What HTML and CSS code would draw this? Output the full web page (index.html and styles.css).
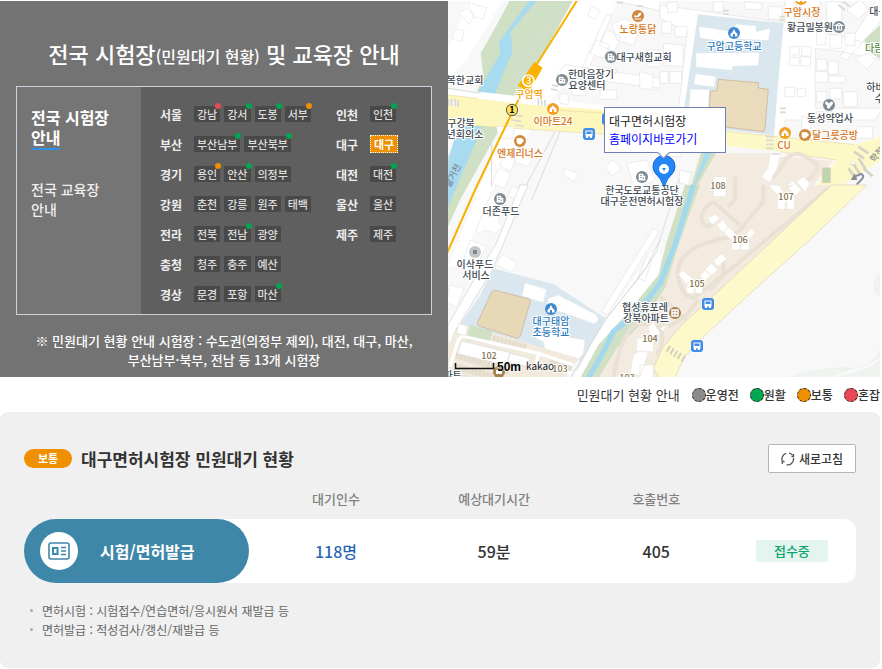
FILE: index.html
```html
<!DOCTYPE html>
<html lang="ko">
<head>
<meta charset="utf-8">
<meta name="viewport" content="width=device-width, initial-scale=1">
<title>전국 시험장 안내</title>
<link rel="stylesheet" href="styles.css">
</head>
<body>
<main class="page">
<section class="finder">
  <div class="guide">
    <h1>전국 시험장<small>(민원대기 현황)</small> 및 교육장 안내</h1>
    <div class="box">
      <nav class="tabs">
        <a class="tab current" href="#exam">전국 시험장<br><span>안내</span></a>
        <a class="tab" href="#edu">전국 교육장<br>안내</a>
      </nav>
      <div class="regions">
        <dl>
          <div class="row"><dt>서울</dt><dd><button class="busy">강남</button><button class="smooth">강서</button><button class="smooth">도봉</button><button class="normal">서부</button></dd></div>
          <div class="row"><dt>부산</dt><dd><button class="smooth">부산남부</button><button class="smooth">부산북부</button></dd></div>
          <div class="row"><dt>경기</dt><dd><button class="normal">용인</button><button class="smooth">안산</button><button>의정부</button></dd></div>
          <div class="row"><dt>강원</dt><dd><button>춘천</button><button>강릉</button><button>원주</button><button>태백</button></dd></div>
          <div class="row"><dt>전라</dt><dd><button>전북</button><button class="smooth">전남</button><button>광양</button></dd></div>
          <div class="row"><dt>충청</dt><dd><button>청주</button><button>충주</button><button>예산</button></dd></div>
          <div class="row"><dt>경상</dt><dd><button>문경</button><button>포항</button><button class="smooth">마산</button></dd></div>
        </dl>
        <dl>
          <div class="row"><dt>인천</dt><dd><button class="smooth">인천</button></dd></div>
          <div class="row"><dt>대구</dt><dd><button class="selected">대구</button></dd></div>
          <div class="row"><dt>대전</dt><dd><button class="smooth">대전</button></dd></div>
          <div class="row"><dt>울산</dt><dd><button>울산</button></dd></div>
          <div class="row"><dt>제주</dt><dd><button>제주</button></dd></div>
        </dl>
      </div>
    </div>
    <p class="notice">※ 민원대기 현황 안내 시험장 : 수도권(의정부 제외), 대전, 대구, 마산,<br>부산남부·북부, 전남 등 13개 시험장</p>
  </div>
  <div class="map">
    <svg viewBox="448 1 432 376" preserveAspectRatio="xMinYMin slice" role="img" aria-label="지도">
      <defs>
        <g id="bus"><rect x="-6" y="-6" width="12" height="12" rx="3" fill="#3f8de8"/><path d="M-3.500-3.500h7v6h-7zM-3 2h2v2h-2zM1 2h2v2h-2z" fill="#fff"/><path d="M-2.500-2.500h5V0h-5z" fill="#3f8de8"/></g>
        <g id="office"><circle r="6" fill="#7c8b94"/><path d="M-3 3v-6h4v2h2v4zM-4 3h8" fill="#fff" stroke="#fff" stroke-width=".6"/><path d="M-1.800-1.500h1.500M-1.800.5h1.500M1.300.5v1.500" stroke="#7c8b94"/></g>
        <g id="school"><circle r="6" fill="#4089cf"/><path d="M0-4 1.500-1 3.500 1v2.500H1V1h-2v2.500h-2.500V1L-1.500-1z" fill="#fff"/></g>
        <g id="cafe"><circle r="6" fill="#d08a3c"/><path d="M-3-2.500h5V1a2 2 0 0 1-2 2h-1a2 2 0 0 1-2-2zM2-1.500c2 0 2 2.500 0 2.500" fill="#fff" stroke="#fff" stroke-width=".7"/></g>
        <g id="shop"><circle r="6" fill="#f0a12b"/><path d="M-3.500 0 0-3.500 3.500 0v3h-7z" fill="#fff"/><path d="M-1 3V.5h2V3" fill="#f0a12b"/></g>
      </defs>
      <rect x="448" width="434" height="378" fill="#f8f8f8"/>
      <!-- north-west: stream, park and metro line -->
      <g transform="translate(440) scale(.33333)">
        <path d="M90 0h100L80 180 24 235v-90z" fill="#fff"/>
        <path d="M210 0h200L285 200 205 340 60 600 24 680V480l66-160 40-90-8-70 45-80z" fill="#cfe0c5"/>
        <path d="M270 0h22L212 95l6 60-28 65-60 150-46 110L24 620V480l35-115 40-65 62-105 20-35-4-35z" fill="#a8daf0"/>
        <path d="M400 0h138L435 190 330 300 150 580 60 800H24L205 350z" fill="#fff"/>
        <path d="M24 265 660 335v80L24 355z" fill="#fff"/>
        <path d="M375 195l285 40v30l-310-40zM510 0h150v32zM500 45h16l-65 150 80 15-4 10-100-18z" fill="#fff" stroke="#e3e3e3" stroke-width="2"/>
        <path d="M378 0 225 250M335 40 190 280M24 265l100 15M24 500v-40M345 395 235 600M360 395l-85 205M155 430v130" fill="none" stroke="#dadada" stroke-width="3"/>
        <path d="M24 285l190 23 75 8 371 25v70L24 372z" fill="#fdf7bd"/><path d="M24 372l475 31M24 285l90 10M340 330l320 20" fill="none" stroke="#ead9a4" stroke-width="2"/>
        <path d="M30 300l20 2v16l-20-2zM85 8l55 15-10 35-30-8zM45 85l28 8-8 32-28-8zM55 40l28-15 20 22-15 25zM515 75l40-20 45 30-20 50-50-15zM500 90l-22 45 45 20 20-45zM470 120l-20 40 40 15 20-40zM395 258h40v30l-40-4zM480 270h50v28h-50zM360 280l25 4v30l-25-4zM520 480l-25 20 20 28 28-22zM375 505l42 18-15 22-33-22zM560 490l60-10 25 60-60 30zM170 380h50v35h-45zM235 440l50 20-20 40-45-15zM195 465l35 12-18 34-35-12zM175 505l38 15-20 45-38-15zM598 215l40 10v45l-38-5zM455 20l25 10-12 28-25-10zM620 150h40v50h-40z" fill="#fff" stroke="#e5e5e5" stroke-width="2"/>
        <path d="M25 296v20M35 297v20M45 298v20M55 300v20M220 345l28 4M215 360l28 4M225 375l26 4M335 255l20 4M333 267l20 4M295 295v20M305 297v20M315 299v20M530 8h20M590 18h20" stroke="#d9d9d2" stroke-width="5"/>
        <circle cx="283" cy="356" r="30" fill="#fdf7bd"/><path d="M310 335v45l90 10v-45z" fill="#fdf7bd"/>
        <path d="M412 0 283 205 215 340 105 570 12 780" fill="none" stroke="#f9b000" stroke-width="6"/>
        <path d="M283 186l25 17-40 70-35-15z" fill="#fcb200"/>
        <circle cx="265" cy="242" r="17" fill="#fcb200" stroke="#fff" stroke-width="5"/><circle cx="216" cy="330" r="17" fill="#ffe352" stroke="#555" stroke-width="3"/>
      </g>
      <!-- north-east: high school and side streets -->
      <g transform="translate(660) scale(.33333)">
        <path d="M0 0h666v400L0 330z" fill="#f8f8f8"/>
        <path d="M0 15l105 15 270 38V0h28v75l263 65v40l-120-25-80-10v180h200l-20 35H375v60l-35 20 20-340-245-30-33 300-30-10 30-265L0 55zM650 0h16v60L560 180l-20-10z" fill="#fff" stroke="#e3e3e3" stroke-width="2"/>
        <path d="M114 43l257 27-31 335-275-30z" fill="#dae7ef"/>
        <path d="M118 80l100 15 10-22 60 5v18l42-10-5 35-95-5-5 12-105-15zM108 160l190-2-4 38-75 2-5 12-105-10zM107 222l60 8-4 30-60-7zM92 268l55 2-4 110-60-5z" fill="#fff"/>
        <path d="M175 238l120 10v16l30 4-10 115-5 12-165-20 6-100 20-4z" fill="#e9dbbc" stroke="#c8aa8d" stroke-width="2"/>
        <path d="M0 388l75-8 120 14 390 40 81-25v70L510 580H450l80-100-170-25L0 415z" fill="#fdf9c7"/><path d="M195 394l390 40M360 455l170 25" stroke="#ead9a4" stroke-width="2"/>
        <path d="M120 460h210l30 10 160 12-80 98H85z" fill="#f3ebe0"/>
        <path d="M125 455h45l-60 105-10 60H75zM612 120l54-50v110l-30-18z" fill="#cfe0c5"/><path d="M137 455h18l-55 110-10 40H83z" fill="#a8daf0"/>
        <path d="M332 460l27 5-12 60-20 20-20-15 18-25z" fill="#fff"/>
        <path d="M20 10l30-6 4 30-30 5zM5 65h30v35H5zM45 80h35v30H45zM10 130l60 5v65l-60-5zM0 215h25v35H0zM30 215h35v35H30zM160 5h30v30h-30zM255 5l50 5v20l-50-3zM325 20h42v38h-42zM425 0h55v50h-55zM500 5h45v60h-45zM560 30l40-30 25 28-30 30zM470 95h28v40h-28zM510 105h35v40h-35zM555 100h30v38l-30-5zM390 140h28v25h-28zM425 140h28v28h-28zM388 172h30v25h-30zM422 170h30v28h-30zM470 178h30v33h-30zM505 183h30v40h-30zM465 215h38v32h-38zM507 228h50v20h-50zM375 262h30v28h-30zM412 265h25v25h-25zM470 275h30v30h-30zM510 265h35v32h-35zM550 275h42v45h-42zM585 175l40-15 22 20-28 28zM590 380h48v35h-48zM468 335h50v30h-50zM425 350h28v45h-28zM30 435h32v35H30zM60 510l35 8-10 38-30-10zM160 530h40v60h-40zM380 555l20-12 20 25-20 15zM415 558l22-15 20 20-20 18z" fill="#fff" stroke="#e3e3e3" stroke-width="2"/>
        <path d="M225 525v60M340 535l40-60q25-20 45-10l30 15q40 20-15 65" fill="none" stroke="#ece2d5" stroke-width="13"/>
        <path d="M487 504h24v44h-24z" fill="#bed5ad" stroke="#dccfb9" stroke-width="3"/>
        <path d="M190 32h16M190 42h16M358 50h16M358 60h16M360 325h18M360 337h18M318 410h23M318 421h23M318 433h23M318 445h23M335 462h24M535 15l20 15M550 5l20 15" stroke="#d9d9ce" stroke-width="5"/>
        <path d="M565 505l22 30M580 492l22 33M595 475l22 32M610 505l28 24M582 455l30 20M595 440l30 20" stroke="#d6d2c7" stroke-width="8"/>
        <path d="M590 554l17-18q7-12-5-14l-18 8" fill="none" stroke="#888c98" stroke-width="6"/><path d="M572 540l12-20 8 20z" fill="#888c98"/>
        <path d="M570 493l8-12 12 12z" fill="#fff" stroke="#bbb"/>
      </g>
      <!-- south-west: elementary school -->
      <g transform="translate(440 185) scale(.33333)">
        <path d="M240 0h24l-80 190-30 70-110 180-20 60v-80l95-165 50-80z" fill="#fff" stroke="#dedede" stroke-width="3"/>
        <path d="M160 250l180 47 160 105-80 125-360-110 60-85z" fill="#dae7ef"/>
        <path d="M165 20l30 10-20 80 12 15-20 22-30-12-20 10-8-10 20-50 15-35zM215 5l20 8-12 28-20-8zM90 165l48 20-30 60-40-12zM187 208l46 28-20 25-45-22zM30 300l42 10-22 55-30-12zM255 293l65 20-10 40-65-20zM325 340l30-10 115 60 5 15-12 12-95-35-50-10zM350 450l85 15-5 40-20 25-95-35-5-25-25-12 25-25z" fill="#fff" stroke="#e4e8ea" stroke-width="2"/>
        <path d="M165 316l100 25q8 2 5 12l-28 97q-5 12-17 8l-105-34q-11-3-6-14l38-83q5-13 13-11z" fill="#e7d9b8" stroke="#c8a998" stroke-width="2"/>
        <path d="M60 415l355 105-40 60H24V480z" fill="#f1eadd"/>
        <path d="M90 420l68 18-10 38-68-12z" fill="#cfe0c5"/>
        <path d="M158 460l100 28M48 510l160 48M45 545l130 35M330 530l65 20" stroke="#e5dccd" stroke-width="20" stroke-dasharray="10 2"/>
        <path d="M30 545l25-80 10-12 230 52-8 40M295 505l105 35M295 535l100 30" fill="none" stroke="#fff" stroke-width="10"/>
        <path d="M65 468l145 35-12 38-145-35zM55 415l27 8-4 30-28-8zM30 560l60 15M210 505l60 15-8 25-60-15z" fill="#fff" stroke="#ddd" stroke-width="2"/>
        <path d="M660 180v140L530 480 465 580H400l90-170 170-240z" fill="#fff"/>
        <path d="M640 130l17 10-155 250-17-10zM620 215l15 12-20 60-22-8z" fill="#fff" stroke="#e3e3e3" stroke-width="2"/>
        <path d="M660 165 620 245 500 400 390 580" fill="none" stroke="#ccc" stroke-width="2"/>
      </g>
      <!-- south-east: apartment blocks and main road -->
      <g transform="translate(660 185) scale(.33333)">
        <path d="M110 0h405L340 170 140 360 50 440 0 500v80h-190l25-70 95-80L0 320z" fill="#f3ebe0"/>
        <path d="M75 0h45L55 180 15 310-60 420-130 490-185 580h-55l55-100 90-100 90-110L20 170z" fill="#cfe0c5"/>
        <path d="M100 0 45 180 0 295l-65 85-75 60-35 70-40 70" fill="none" stroke="#a3d9ed" stroke-width="16"/>
        <path d="M60-20 15 115-10 200-60 275-170 410-250 555" fill="none" stroke="#ddd" stroke-width="3"/>
        <path d="M160 50q-60 40-20 75l20-8M160 50l80 70M220 155Q40 180 55 280q10 50 45 60l115-90 290-240M310 0v50l-70 85-30 20M225 0v45l-20 20M75 395l-50 30M75 395l40-50M190 220v50l-40 45M-10 410q35 40 0 100M-140 580q20-130 70-165l70 10M0 335l80 70" fill="none" stroke="#eae1d5" stroke-width="12"/>
        <path d="M515 0h105L460 155 260 335 120 465 70 520 45 580H0l-20-30 30-65 50-60L200 295z" fill="#fdf9ca" stroke="#d8d1bd" stroke-width="2"/>
        <path d="M142 100l25-12 12 12-22 20zM170 120l18-15 17 20-17 18zM190 140l16-14 30 30-18 14zM260 145l15-15 10 15-22 20zM215 160h26v35h-26zM243 160h25v35h-25zM55 268l15-12 35 33-20 18zM80 292h23v33H80zM105 292h23v33h-23zM120 270l17-15 15 15-20 20zM135 252l20-17 18 20-20 16zM160 228l25-22 14 15-25 24zM160 0h38v34h-38zM325 0h30l15 20-15 15zM352 25h24v48h-24zM380 30h23v43h-23zM385 10l20-15 20 20-20 18zM410-10l20-15 20 20-15 25zM-35 425l15-15 20 35-30 20zM-70 460h50v40h-50zM-80 510l25-15 20 8-25 70-30-10zM-60 540h40v40h-40zM0 430l20-10-10 20z" fill="#fff" stroke="#ebe5dc" stroke-width="2"/>
        <path d="M666 260q-35 30-18 65l18 15zM380 580q130-40 200-30 70-10 86-70v100zM500 580q120-10 166-60" fill="#eff4ef" stroke="#e8eeea" stroke-width="2"/>
        <path d="M30 482l-10 18M41 490l-10 18M52 497l-10 18M63 504l-10 18M75 512l-10 18" stroke="#d3d0be" stroke-width="6"/>
      </g>
      <g class="place" text-anchor="middle">
        <text x="465" y="84">복한교회</text><text x="461" y="127">구강북</text><text x="465" y="138">년회의소</text>
        <text x="591" y="78">한마음장기</text><text x="587" y="89">요양센터</text><text x="644" y="61">대구새힘교회</text>
        <text x="501" y="215">더존푸드</text><text x="475" y="268">이삭푸드</text><text x="476" y="279">서비스</text>
        <text x="642" y="194">한국도로교통공단</text><text x="642" y="205">대구운전면허시험장</text>
        <text x="645" y="311">협성휴포레</text><text x="646" y="322">강북아파트</text>
        <text x="810" y="31">황금밀봉원</text><text x="830" y="122">동성약업사</text><text x="883" y="15">대구빌</text><text x="880" y="91">하버드</text><text x="884" y="102">수학</text>
        <text x="448" y="379">아파트</text>
      </g>
      <g class="place orange" text-anchor="middle">
        <text x="638" y="33">노랑통닭</text><text x="553" y="125">이마트24</text><text x="520" y="157">엔제리너스</text><text x="802" y="16">구암시장</text><text x="784" y="149">CU</text><text x="835" y="139">달그릇공방</text>
        <text class="station" x="529" y="98">구암역</text>
      </g>
      <g class="place blue" text-anchor="middle"><text x="734" y="50">구암고등학교</text><text x="551" y="325">대구태암</text><text x="551" y="336">초등학교</text></g>
      <text class="place green" x="865" y="52">다람쥐</text>
      <g class="block" text-anchor="middle"><text x="718" y="189">108</text><text x="786" y="200">107</text><text x="740" y="243">106</text><text x="697" y="287">105</text><text x="650" y="342">104</text><text x="489" y="359">102</text><text x="560" y="372">103</text><text x="627" y="381">103</text></g>
      <g class="road"><text transform="translate(450 188) rotate(-63)">팔거천</text><text transform="translate(874 163) rotate(-48)">학정로</text></g>
      <text class="line" x="529" y="84" text-anchor="middle" fill="#fff">3</text><text class="line" x="512" y="113" text-anchor="middle">1</text>
      <use href="#office" x="562" y="80"/><use href="#office" x="611" y="57"/><use href="#office" x="642" y="177"/><use href="#office" x="500" y="199"/>
      <g transform="translate(839 27)"><circle r="6" fill="#7c8b94"/><path d="M-3.500-1.500 0-3.500l3.500 2zM-2.500-1v3.500M0-1v3.500M2.500-1v3.500M-3.500 3h7" fill="none" stroke="#fff" stroke-width="1.200"/></g>
      <g transform="translate(829 105)"><circle r="6" fill="#7c8b94"/><path d="M-2.500-2l1 1M2.500-2-.5 2" stroke="#fff" stroke-width="3" stroke-linecap="round"/></g>
      <circle cx="475" cy="252" r="6" fill="#c4c7ca"/><path d="M473 250h4v4h-4z" fill="#80858a"/>
      <g transform="translate(638 16)"><circle r="6" fill="#ce873e"/><path d="M-3.500 1.500V-1l2.500 1 2-3 2.500-.5-1 3-2 1.500z" fill="#fff"/><path d="M-3.500 3h7" stroke="#fff"/></g>
      <use href="#cafe" x="520" y="141"/><use href="#cafe" x="805" y="135"/><use href="#shop" x="553" y="109"/><use href="#shop" x="785" y="133"/><use href="#shop" x="801" y="-1"/>
      <use href="#school" x="734" y="33"/><use href="#school" x="551" y="309"/>
      <use href="#bus" x="589" y="134"/><use href="#bus" x="608" y="119"/><use href="#bus" x="708" y="304"/><use href="#bus" x="697" y="346"/>
      <g transform="translate(675 313)"><circle r="6" fill="#a58250"/><path d="M-3-3h6v6h-6zM0-3v6M-3 0h6" fill="none" stroke="#fff" stroke-width="1.500"/></g>
      <circle cx="499" cy="372" r="6" fill="#a58250"/><path d="M496 370h6v4h-6z" fill="#fff"/>
      <path d="M455.500 363v5.500h38V363" fill="none" stroke="#111" stroke-width="1.500"/>
      <text class="scale" x="497" y="371">50m</text><text class="brand" x="526" y="370">kakao</text>
      <path d="M664 187q-3-9-8-13a11 11 0 1 1 16 0q-5 4-8 13z" fill="#2386f7" stroke="#1668cf"/><circle cx="664" cy="169" r="5" fill="#fff"/><path d="M662 168h4l-2 3z" fill="#2386f7"/>
    </svg>
    <div class="popup"><span>대구면허시험장</span><a href="#home">홈페이지바로가기</a></div>
  </div>
</section>
<div class="legend"><span class="caption">민원대기 현황 안내</span><ul><li class="idle">운영전</li><li class="smooth">원활</li><li class="normal">보통</li><li class="busy">혼잡</li></ul></div>
<section class="status">
  <header><span class="badge">보통</span><h2>대구면허시험장 민원대기 현황</h2>
    <button class="refresh"><svg viewBox="0 0 14 14" width="14" height="14" aria-hidden="true"><path d="M5 1.300A6 6 0 0 0 2 10.400M5.500 12.800A6 6 0 0 0 12.500 6M8 1.100a6 6 0 0 1 3.500 2M10.500 4.500h2V2M3.500 9.500H1.300V12" fill="none" stroke="#555" stroke-width="1.300"/></svg>새로고침</button></header>
  <table>
    <colgroup><col class="kind"><col class="people"><col class="time"><col class="call"><col class="state"></colgroup>
    <thead><tr><td></td><th scope="col">대기인수</th><th scope="col">예상대기시간</th><th scope="col">호출번호</th><td></td></tr></thead>
    <tbody><tr><th scope="row"><div class="pill"><span class="disc"><svg viewBox="0 0 22 18" width="22" height="18" aria-hidden="true"><rect x="1" y="1" width="20" height="16" rx="2" fill="none" stroke="#3f87a8" stroke-width="1.600"/><path d="M5 6h4.500v6H5z" fill="none" stroke="#3f87a8" stroke-width="2"/><path d="M13 5.500h5M13 9h5M13 12.500h5" stroke="#3f87a8" stroke-width="1.600"/></svg></span><span class="name">시험/면허발급</span></div></th><td class="count">118명</td><td>59분</td><td>405</td><td class="last"><span class="open">접수중</span></td></tr></tbody>
  </table>
  <ul class="notes"><li>면허시험 : 시험접수/연습면허/응시원서 재발급 등</li><li>면허발급 : 적성검사/갱신/재발급 등</li></ul>
</section>
</main>
</body>
</html>
```
FILE: styles.css
```css
* { box-sizing: border-box; }
body, h1, h2, p, ul, dl, dd { margin: 0; padding: 0; }
body { background: #fff; color: #333; font-family: "Noto Sans CJK KR", sans-serif; font-size: 13px; font-weight: 500; }
ul { list-style: none; }
a { color: inherit; text-decoration: none; }
button { font: inherit; color: inherit; cursor: pointer; }
.page { padding: 1px 2px 0 0; overflow: hidden; }
.finder { display: grid; grid-template-columns: 448px 1fr; }

.guide { background: #737373; color: #fff; padding: 36px 16px 8px; }
.guide h1 { font-size: 22px; font-weight: 500; line-height: 32px; text-align: center; }
.guide h1 small { font-size: 16px; }
.box { display: grid; grid-template-columns: 124px 1fr; margin-top: 14px; border: 1px solid #ccd3dc; }
.tabs { padding: 20px 14px; background: #757575; }
.tab { display: block; font-size: 14px; line-height: 20px; color: #eee; }
.tab.current { margin-bottom: 29px; font-size: 16px; font-weight: 700; color: #fff; }
.tab.current span { display: inline-block; padding-bottom: 1px; border-bottom: 2px solid #2f8fea; }
.regions { display: grid; grid-template-columns: 176px 1fr; padding: 12px 19px 5px; background: #5f5f5f; }
.row { display: flex; align-items: center; height: 30px; }
.row dt { width: 34px; font-size: 12px; font-weight: 700; color: #eee; }
.row dd { display: flex; gap: 4px; }
.row button { position: relative; padding: 0 3px; border: 0; background: #494949; color: #ddd; font-size: 11px; line-height: 16px; white-space: nowrap; }
.row button[class]::after { content: ""; position: absolute; top: -3px; right: -1px; width: 6px; height: 6px; border-radius: 50%; background: #00a651; }
.row button.busy::after { background: #e84a55; }
.row button.normal::after { background: #ee9000; }
.row button.selected { background: #ee9000; color: #fff; border: 1px dotted #fff; font-weight: 700; }
.row button.selected::after { display: none; }
.notice { margin: 16px -8px 0; font-size: 13px; line-height: 19px; text-align: center; }

.map { position: relative; overflow: hidden; }
.map > svg { position: absolute; inset: 0; width: 100%; height: 100%; }
.place { font-size: 10px; fill: #414a52; stroke: #fff; stroke-width: 2px; paint-order: stroke; }
.orange { fill: #d57618; }
.blue { fill: #2b79bc; }
.green { fill: #5b8c49; }
.place .station { fill: #f0a000; }
.block { font-size: 9px; fill: #85714e; stroke: #fff; stroke-width: 2px; paint-order: stroke; }
.road { font-size: 9px; fill: #7d878e; }
.line { font-size: 9px; font-weight: 700; }
.scale { font: 700 12px "Liberation Sans", sans-serif; fill: #000; stroke: #fff; stroke-width: 1px; paint-order: stroke; }
.brand { font: 400 10px "Noto Sans CJK KR", sans-serif; fill: #111; stroke: #fff; stroke-width: 1px; paint-order: stroke; }
.popup { position: absolute; left: 156px; top: 106px; width: 122px; height: 46px; padding: 4px; border: 1px solid #6f7faf; background: #fff; font-size: 12px; font-weight: 400; line-height: 18px; color: #222; }
.popup span, .popup a { display: block; white-space: nowrap; }
.popup a { color: #00f; }
.popup::after { content: ""; position: absolute; left: 54px; bottom: -5px; width: 8px; height: 8px; background: #fff; border: solid #6f7faf; border-width: 0 1px 1px 0; transform: rotate(45deg); }

.legend { display: flex; justify-content: flex-end; align-items: center; gap: 12px; height: 35px; white-space: nowrap; }
.caption { font-weight: 400; }
.legend ul { display: flex; gap: 11px; font-size: 12px; }
.legend li { display: flex; align-items: center; }
.legend li::before { content: ""; width: 12px; height: 12px; border: 1px dashed #222; border-radius: 50%; }
.idle::before { background: #8b8b8b; }
.legend .smooth::before { background: #00a651; }
.legend .normal::before { background: #ee9000; }
.legend .busy::before { background: #e84a55; }

.status { background: #f0f0f0; border-radius: 8px; padding: 32px 24px 29px; }
.status header { display: flex; align-items: center; }
.badge { width: 48px; border-radius: 10px; background: #ee9000; color: #fff; font-size: 11px; font-weight: 700; line-height: 19px; text-align: center; }
h2 { margin-left: 9px; font-size: 17px; font-weight: 700; line-height: 29px; }
.refresh { display: flex; align-items: center; justify-content: center; gap: 4px; width: 88px; height: 29px; margin-left: auto; padding: 0; border: 1px solid #b5b5b5; border-radius: 2px; background: #fff; font-size: 12px; }
table { width: 100%; margin-top: 8px; border-spacing: 0; table-layout: fixed; text-align: center; }
.kind { width: 27%; }
.people { width: 21%; }
.time { width: 17%; }
.call { width: 22%; }
.state { width: 13%; }
th, td { padding: 0; }
thead th { height: 38px; padding-bottom: 4px; font-weight: 500; color: #808080; }
tbody td { background: #fff; font-size: 16px; color: #333; }
tbody th { background: linear-gradient(90deg, transparent 50%, #fff 50%); }
.pill { display: flex; align-items: center; height: 64px; padding-left: 16px; border-radius: 32px; background: #3f87a8; color: #fff; }
.disc { display: flex; align-items: center; justify-content: center; width: 38px; height: 38px; border-radius: 50%; background: #fff; }
.name { margin-left: 22px; font-size: 16px; font-weight: 700; }
tbody .count { color: #2a66b8; }
tbody .last { padding-right: 20px; border-radius: 0 12px 12px 0; }
.open { display: block; width: 72px; margin: 0 auto; border-radius: 3px; background: #e4f5ef; color: #0ba36f; font-size: 13px; line-height: 22px; }
.notes { margin-top: 18px; font-size: 12px; font-weight: 400; line-height: 19px; color: #666; }
.notes li { display: flex; align-items: center; gap: 9px; padding-left: 6px; }
.notes li::before { content: ""; width: 3px; height: 3px; border-radius: 50%; background: #aaa; }
```
